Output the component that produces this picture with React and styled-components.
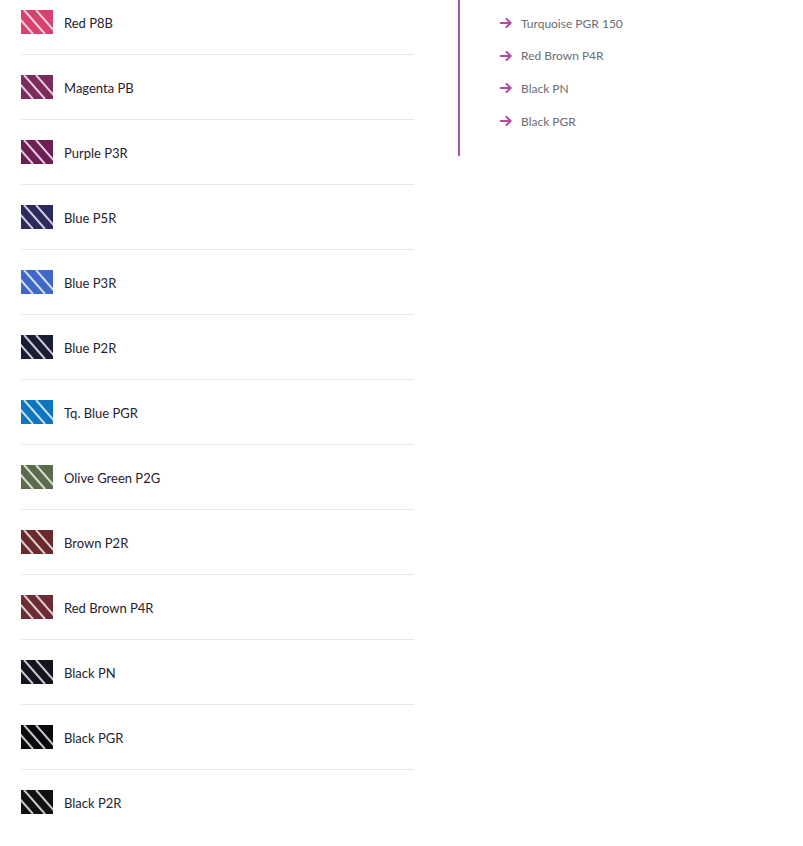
import React from 'react'
import styled, { createGlobalStyle } from 'styled-components'

const GlobalStyle = createGlobalStyle`
	html, body {
		margin: 0;
		padding: 0;
		background: #fff;
		font-family: Lato, 'Open Sans', sans-serif;
		overflow: hidden;
	}
`

const Page = styled.div`
	display: flex;
	align-items: flex-start;
	margin-top: -10px;
	padding-left: 21px;
`

const ColourList = styled.ul`
	width: 393px;
	margin: 0;
	padding: 0;
	list-style: none;
`

const ColourRow = styled.li`
	display: flex;
	align-items: center;
	height: 64px;
	border-bottom: 1px solid ${(props) => (props.last ? 'transparent' : '#e9e9e9')};
`

const Swatch = styled.svg`
	flex: none;
	display: block;
	width: 32px;
	height: 24px;
`

const ColourName = styled.span`
	margin-left: 11px;
	padding-top: 2px;
	font-size: 13px;
	color: #1f2230;
`

const Related = styled.aside`
	margin-left: 44px;
	padding: 17px 0 19px 39px;
	border-left: 2px solid #a6569e;
`

const RelatedList = styled.ul`
	margin: 0;
	padding: 0;
	list-style: none;
`

const RelatedItem = styled.li`
	display: flex;
	align-items: center;
	height: 32.6px;
	font-size: 12px;
	color: #6d6d72;
`

const Arrow = styled.svg`
	flex: none;
	width: 14px;
	height: 14px;
	margin-right: 8px;
`

const colours = [
	['Red P8B', '#d8406f'],
	['Magenta PB', '#7b2c5d'],
	['Purple P3R', '#6d1f55'],
	['Blue P5R', '#2b295d'],
	['Blue P3R', '#4068c8'],
	['Blue P2R', '#1b1c35'],
	['Tq. Blue PGR', '#0d76be'],
	['Olive Green P2G', '#5b6b4b'],
	['Brown P2R', '#6a2a2b'],
	['Red Brown P4R', '#6d2c33'],
	['Black PN', '#16131f'],
	['Black PGR', '#09090e'],
	['Black P2R', '#111113'],
]

const related = ['Turquoise PGR 150', 'Red Brown P4R', 'Black PN', 'Black PGR']

function Stripes({ color }) {
	return (
		<Swatch viewBox='0 0 32 24'>
			<rect width='32' height='24' fill={color} />
			<g stroke='#fff' strokeOpacity='0.78' strokeWidth='2'>
				<line x1='-9' y1='0' x2='12' y2='24' />
				<line x1='3' y1='0' x2='24' y2='24' />
				<line x1='15' y1='0' x2='36' y2='24' />
			</g>
		</Swatch>
	)
}

export default function App() {
	return (
		<>
			<GlobalStyle />
			<Page>
				<ColourList>
					{colours.map(([name, color], i) => (
						<ColourRow key={name} last={i === colours.length - 1}>
							<Stripes color={color} />
							<ColourName>{name}</ColourName>
						</ColourRow>
					))}
				</ColourList>

				<Related>
					<RelatedList>
						{related.map((name) => (
							<RelatedItem key={name}>
								<Arrow viewBox='0 0 24 24' fill='none' stroke='#b04c9f' strokeWidth='3.5' strokeLinecap='round' strokeLinejoin='round'>
									<path d='M3 12h17M13 5l7 7-7 7' />
								</Arrow>
								{name}
							</RelatedItem>
						))}
					</RelatedList>
				</Related>
			</Page>
		</>
	)
}
